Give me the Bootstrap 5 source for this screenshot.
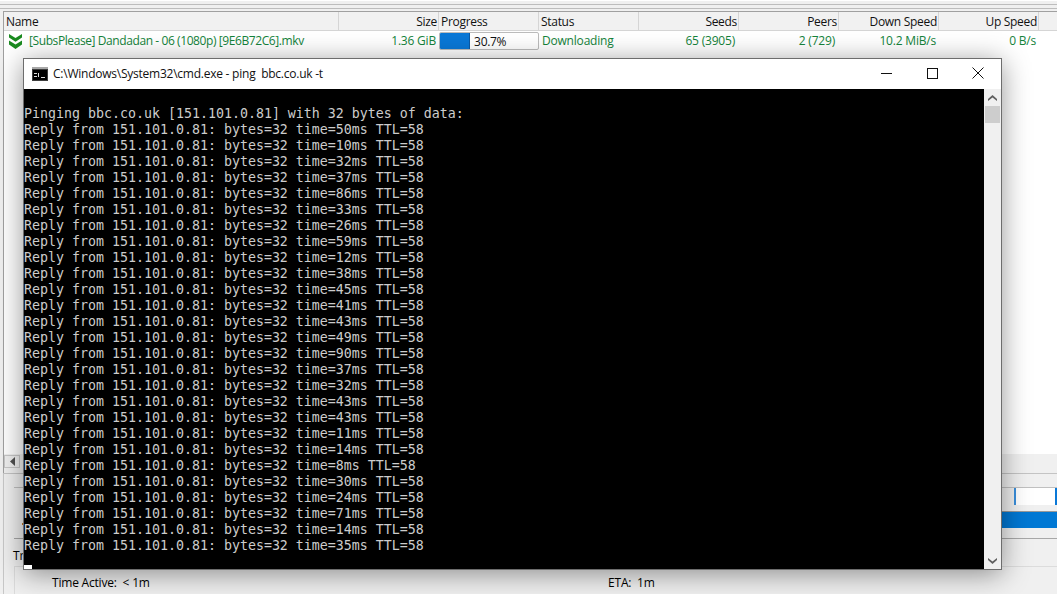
<!doctype html>
<html lang="en">
<head>
<meta charset="utf-8">
<title>Torrent client with ping console</title>
<link href="https://cdn.jsdelivr.net/npm/bootstrap@5.3.0/dist/css/bootstrap.min.css" rel="stylesheet">
<style>
html,body{height:594px;overflow:hidden;}
body{background:#f0f0f0;font-family:"Open Sans","Noto Sans",sans-serif;font-size:12px;color:#000;}
.appw{width:1057px;height:594px;overflow:hidden;position:relative;}
.topstrip{height:11px;background:#f0f0f0;border-top:1px solid #fff;}
.topstrip i{display:block;height:1px;background:#bdbdbd;margin-top:3px;}
.listarea{height:443px;margin-left:3px;border:1px solid #a0a0a0;border-right:0;border-bottom:0;background:#fff;}
.hdr{height:19px;background:#f1f1f1;border-bottom:1px solid #d5d5d5;}
.hc{height:100%;flex:none;border-right:1px solid #d5d5d5;padding:0 1px 0 2px;line-height:20px;white-space:nowrap;color:#111;letter-spacing:-.3px;}
.rw{height:20px;color:#14833b;line-height:20px;letter-spacing:-.2px;white-space:nowrap;}
.rc{height:100%;flex:none;padding:0 3px 0 3px;}
.rc.tight{padding-right:4px;}
.w1{width:335px}.w2,.w3,.w4,.w5,.w6,.w7,.w8{width:100px}
.fname{letter-spacing:-.41px;}
.dlicon{margin:0 7px 0 2px;flex:none;}
.pbar{width:100px;height:18px;margin-top:1px;border:1px solid #bcbcbc;border-radius:2px;background:#fff;color:#111;overflow:hidden;margin-left:-3px;}
.pfill{background:#0a78d7;height:100%;border-right:1px solid #0b5aa6;}
.ptext{line-height:17px;padding-left:4px;letter-spacing:-.3px;}
.hscroll{height:19px;margin-left:3px;padding-top:1px;border-left:1px solid #a0a0a0;}
.hscroll b{display:flex;width:16px;height:13px;background:#f0f0f0;border:1px solid #c8c8c8;align-items:center;justify-content:center;}
.lower{height:121px;margin-left:3px;border-left:1px solid #c8c8c8;border-top:1px solid #c4c4c4;position:relative;}
.strip1{height:13px;}
.pieces{height:18px;border-top:1px solid #c0c0c0;display:flex;justify-content:flex-end;margin-left:10px;}
.piecebox{width:41px;background:#fff;border-left:2px solid #3a8fdc;}
.piecebox2{width:2px;background:#0a78d7;}
.gap7{height:6px;}
.bluebar{height:17px;background:#0078d4;border-top:1px solid #999;margin-left:100px;}
.gap11{height:11px;border-bottom:1px solid #a8a8a8;margin-left:10px;}
.tabl{height:27px;line-height:34px;margin-left:9px;}
.infobox{margin-left:10px;border-top:1px solid #dcdcdc;border-left:1px solid #dcdcdc;height:30px;background:#f0f0f0;}
.info{height:27px;line-height:31px;letter-spacing:-.2px;}
.lbl1{margin-left:37px;width:556px;}
.speck{position:absolute;left:18px;top:49px;width:2px;height:2px;background:#c8761e;}
.cwin{position:absolute;left:23px;top:58px;width:979px;height:512px;background:#fff;border:1px solid #6d6d6d;box-shadow:0 4px 26px rgba(0,0,0,.42);display:flex;flex-direction:column;}
.ctitle{height:30px;flex:none;font-size:12px;letter-spacing:-.24px;color:#111;padding-left:8px;gap:5px;}
.cbtn{width:46px;height:28px;display:flex;align-items:center;justify-content:center;margin-bottom:2px;}
.cbody{flex:1;min-height:0;display:flex;background:#000;}
.cterm{flex:1;color:#cccccc;font-family:"DejaVu Sans Mono","Liberation Mono",monospace;font-size:13.29px;line-height:16px;margin:0;padding:17px 0 0 0;overflow:hidden;position:relative;white-space:pre;}
.ccursor{position:absolute;left:0;bottom:0;width:8px;height:4px;background:#fff;}
.csb{width:17px;background:#f0f0f0;display:flex;flex-direction:column;flex:none;}
.csb span{height:17px;display:flex;align-items:center;justify-content:center;}
.cthumb{height:17px;background:#cdcdcd;margin:0 1px;}
</style>
</head>
<body>
<div class="appw">
  <div class="topstrip"><i></i><i></i></div>
  <div class="listarea">
    <div class="hdr d-flex">
      <div class="hc w1">Name</div>
      <div class="hc w2 text-end">Size</div>
      <div class="hc w3">Progress</div>
      <div class="hc w4">Status</div>
      <div class="hc w5 text-end">Seeds</div>
      <div class="hc w6 text-end">Peers</div>
      <div class="hc w7 text-end">Down Speed</div>
      <div class="hc w8 text-end">Up Speed</div>
    </div>
    <div class="rw d-flex">
      <div class="rc w1 d-flex align-items-center">
        <svg width="13" height="15" viewBox="0 0 13 15" class="dlicon"><path d="M0 0 6.500 4 13 0V3.500L6.500 7.800 0 3.500Z" fill="#1a8a1f"/><path d="M0 6.500 6.500 10.500 13 6.500V10.500L6.500 15 0 10.500Z" fill="#1a8a1f"/></svg>
        <span class="fname">[SubsPlease] Dandadan - 06 (1080p) [9E6B72C6].mkv</span>
      </div>
      <div class="rc w2 text-end">1.36 GiB</div>
      <div class="rc w3"><div class="pbar d-flex"><div class="pfill" style="width:30.7%"></div><div class="ptext">30.7%</div></div></div>
      <div class="rc w4">Downloading</div>
      <div class="rc w5 tight text-end">65 (3905)</div>
      <div class="rc w6 tight text-end">2 (729)</div>
      <div class="rc w7 text-end">10.2 MiB/s</div>
      <div class="rc w8 text-end">0 B/s</div>
    </div>
  </div>
  <div class="hscroll"><b><svg width="5" height="9" viewBox="0 0 5 9"><path d="M5 0V9L0 4.500Z" fill="#505050"/></svg></b></div>
  <div class="lower">
    <span class="speck"></span>
    <div class="strip1"></div>
    <div class="pieces"><div class="piecebox"></div><div class="piecebox2"></div></div>
    <div class="gap7"></div>
    <div class="bluebar"></div>
    <div class="gap11"></div>
    <div class="tabl">Tr</div>
    <div class="infobox">
      <div class="info d-flex"><div class="lbl1">Time Active:&nbsp; &lt; 1m</div><div>ETA:&nbsp; 1m</div></div>
    </div>
  </div>

  <div class="cwin">
    <div class="ctitle d-flex align-items-center">
      <svg width="16" height="14" viewBox="0 0 16 14" class="flex-none"><rect width="16" height="14" fill="#3c3c3c"/><rect x="1" y="3" width="14" height="10" fill="#000"/><rect x="0" y="0" width="16" height="2" fill="#a8a8a8"/><rect x="2" y="6" width="3" height="1" fill="#ddd"/><rect x="2" y="9" width="3" height="1" fill="#ddd"/><rect x="6" y="6" width="1" height="4" fill="#ddd"/><rect x="9" y="10" width="4" height="1" fill="#ddd"/></svg>
      <span class="flex-grow-1">C:\Windows\System32\cmd.exe - ping&nbsp; bbc.co.uk -t</span>
      <div class="d-flex">
        <div class="cbtn"><svg width="11" height="11" viewBox="0 0 11 11"><path d="M0 5.500H11" stroke="#111"/></svg></div>
        <div class="cbtn"><svg width="11" height="11" viewBox="0 0 11 11"><rect x=".5" y=".5" width="10" height="10" fill="none" stroke="#111"/></svg></div>
        <div class="cbtn"><svg width="12" height="12" viewBox="0 0 12 12"><path d="M.5 .5 11.500 11.500M11.500 .5 .5 11.500" stroke="#111"/></svg></div>
      </div>
    </div>
    <div class="cbody">
      <pre class="cterm">Pinging bbc.co.uk [151.101.0.81] with 32 bytes of data:
Reply from 151.101.0.81: bytes=32 time=50ms TTL=58
Reply from 151.101.0.81: bytes=32 time=10ms TTL=58
Reply from 151.101.0.81: bytes=32 time=32ms TTL=58
Reply from 151.101.0.81: bytes=32 time=37ms TTL=58
Reply from 151.101.0.81: bytes=32 time=86ms TTL=58
Reply from 151.101.0.81: bytes=32 time=33ms TTL=58
Reply from 151.101.0.81: bytes=32 time=26ms TTL=58
Reply from 151.101.0.81: bytes=32 time=59ms TTL=58
Reply from 151.101.0.81: bytes=32 time=12ms TTL=58
Reply from 151.101.0.81: bytes=32 time=38ms TTL=58
Reply from 151.101.0.81: bytes=32 time=45ms TTL=58
Reply from 151.101.0.81: bytes=32 time=41ms TTL=58
Reply from 151.101.0.81: bytes=32 time=43ms TTL=58
Reply from 151.101.0.81: bytes=32 time=49ms TTL=58
Reply from 151.101.0.81: bytes=32 time=90ms TTL=58
Reply from 151.101.0.81: bytes=32 time=37ms TTL=58
Reply from 151.101.0.81: bytes=32 time=32ms TTL=58
Reply from 151.101.0.81: bytes=32 time=43ms TTL=58
Reply from 151.101.0.81: bytes=32 time=43ms TTL=58
Reply from 151.101.0.81: bytes=32 time=11ms TTL=58
Reply from 151.101.0.81: bytes=32 time=14ms TTL=58
Reply from 151.101.0.81: bytes=32 time=8ms TTL=58
Reply from 151.101.0.81: bytes=32 time=30ms TTL=58
Reply from 151.101.0.81: bytes=32 time=24ms TTL=58
Reply from 151.101.0.81: bytes=32 time=71ms TTL=58
Reply from 151.101.0.81: bytes=32 time=14ms TTL=58
Reply from 151.101.0.81: bytes=32 time=35ms TTL=58<span class="ccursor"></span></pre>
      <div class="csb">
        <span><svg width="9" height="6" viewBox="0 0 9 6"><path d="M4.500 0 9 4V6L4.500 2.500 0 6V4Z" fill="#606060"/></svg></span>
        <div class="cthumb"></div>
        <div class="flex-grow-1"></div>
        <span><svg width="9" height="6" viewBox="0 0 9 6"><path d="M4.500 6 9 2V0L4.500 3.500 0 0V2Z" fill="#606060"/></svg></span>
      </div>
    </div>
  </div>
</div>
<script src="https://cdn.jsdelivr.net/npm/bootstrap@5.3.0/dist/js/bootstrap.bundle.min.js"></script>
</body>
</html>
